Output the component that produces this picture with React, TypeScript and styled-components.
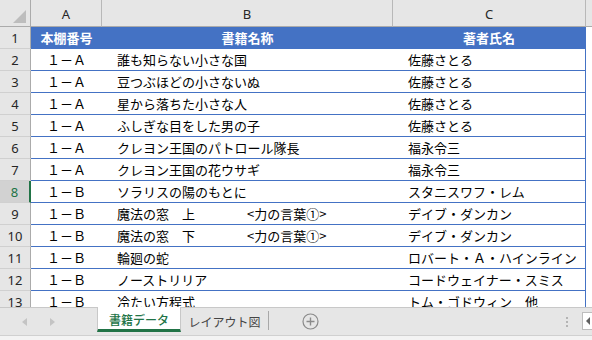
import React from 'react';
import styled, { createGlobalStyle } from 'styled-components';

const GlobalStyle = createGlobalStyle`
  html, body { margin: 0; padding: 0; background: #ffffff; }
  body { width: 592px; height: 340px; overflow: hidden; font-family: "Noto Sans CJK JP", "Noto Sans", sans-serif; }
`;

const HEAD_BG = '#e6e6e6';
const HEAD_LINE = '#ababab';
const BLUE = '#4472c4';
const GREEN = '#217346';

type Book = { shelf: string; title: string; author: string };

const books: Book[] = [
  { shelf: '１－Ａ', title: '誰も知らない小さな国', author: '佐藤さとる' },
  { shelf: '１－Ａ', title: '豆つぶほどの小さないぬ', author: '佐藤さとる' },
  { shelf: '１－Ａ', title: '星から落ちた小さな人', author: '佐藤さとる' },
  { shelf: '１－Ａ', title: 'ふしぎな目をした男の子', author: '佐藤さとる' },
  { shelf: '１－Ａ', title: 'クレヨン王国のパトロール隊長', author: '福永令三' },
  { shelf: '１－Ａ', title: 'クレヨン王国の花ウサギ', author: '福永令三' },
  { shelf: '１－Ｂ', title: 'ソラリスの陽のもとに', author: 'スタニスワフ・レム' },
  { shelf: '１－Ｂ', title: '魔法の窓　上　　　　<力の言葉①>', author: 'デイブ・ダンカン' },
  { shelf: '１－Ｂ', title: '魔法の窓　下　　　　<力の言葉①>', author: 'デイブ・ダンカン' },
  { shelf: '１－Ｂ', title: '輪廻の蛇', author: 'ロバート・Ａ・ハインライン' },
  { shelf: '１－Ｂ', title: 'ノーストリリア', author: 'コードウェイナー・スミス' },
  { shelf: '１－Ｂ', title: '冷たい方程式', author: 'トム・ゴドウィン　他' },
];

const Sheet = styled.div`
  display: grid;
  grid-template-columns: 31px 71px 291px 193px 6px;
  grid-template-rows: 27px;
  grid-auto-rows: 22px;
  height: 307px;
  overflow: hidden;
`;

const Corner = styled.div`
  position: relative;
  box-sizing: border-box;
  background: ${HEAD_BG};
  border-right: 1px solid ${HEAD_LINE};
  border-bottom: 1px solid ${HEAD_LINE};
  &::after {
    content: '';
    position: absolute;
    right: 4px;
    bottom: 3px;
    width: 0;
    height: 0;
    border-left: 13px solid transparent;
    border-bottom: 13px solid #bdbdbd;
  }
`;

const ColHead = styled.div`
  box-sizing: border-box;
  background: ${HEAD_BG};
  border-right: 1px solid #b8b8b8;
  border-bottom: 1px solid ${HEAD_LINE};
  display: flex;
  align-items: center;
  justify-content: center;
  font-family: "Noto Sans", sans-serif;
  font-size: 13px;
  color: #262626;
  padding-top: 1px;
`;

const RowHead = styled.div<{ $active?: boolean }>`
  box-sizing: border-box;
  background: ${(p) => (p.$active ? '#d2d2d2' : HEAD_BG)};
  border-right: ${(p) => (p.$active ? `2px solid ${GREEN}` : `1px solid ${HEAD_LINE}`)};
  border-bottom: 1px solid #d0d0d0;
  display: flex;
  align-items: center;
  justify-content: center;
  font-family: "Noto Sans", sans-serif;
  font-size: 13px;
  color: ${(p) => (p.$active ? GREEN : '#262626')};
`;

const Cell = styled.div<{ $center?: boolean; $head?: boolean; $edge?: boolean }>`
  box-sizing: border-box;
  display: flex;
  align-items: center;
  justify-content: ${(p) => (p.$center ? 'center' : 'flex-start')};
  padding-left: ${(p) => (p.$center ? '0' : '15px')};
  background: ${(p) => (p.$head ? BLUE : '#ffffff')};
  color: ${(p) => (p.$head ? '#ffffff' : '#000000')};
  font-weight: ${(p) => (p.$head ? 700 : 400)};
  font-size: 13px;
  white-space: pre;
  overflow: hidden;
  border-bottom: 1px solid ${BLUE};
  border-right: ${(p) => (p.$edge ? `1px solid ${BLUE}` : 'none')};
`;

const Spare = styled.div`
  background: #ffffff;
`;

const SpareHead = styled.div`
  box-sizing: border-box;
  background: ${HEAD_BG};
  border-bottom: 1px solid ${HEAD_LINE};
`;

const TabBar = styled.div`
  box-sizing: border-box;
  height: 28px;
  background: ${HEAD_BG};
  border-top: 1px solid #c8c8c8;
  display: flex;
  align-items: stretch;
`;

const Nav = styled.div`
  width: 97px;
  display: flex;
  align-items: center;
  gap: 20px;
  padding-left: 22px;
  box-sizing: border-box;
`;

const Arrow = styled.span<{ $dir: 'left' | 'right' }>`
  width: 0;
  height: 0;
  border-top: 4px solid transparent;
  border-bottom: 4px solid transparent;
  ${(p) => (p.$dir === 'left' ? 'border-right: 5px solid #c4c4c4;' : 'border-left: 5px solid #c4c4c4;')}
  margin-right: 3px;
`;

const Tab = styled.div<{ $active?: boolean; $width: number }>`
  box-sizing: border-box;
  width: ${(p) => p.$width}px;
  margin-top: ${(p) => (p.$active ? '-1px' : '0')};
  height: ${(p) => (p.$active ? '25px' : '27px')};
  background: ${(p) => (p.$active ? '#ffffff' : 'transparent')};
  border-bottom: ${(p) => (p.$active ? `3px solid ${GREEN}` : 'none')};
  border-left: ${(p) => (p.$active ? '1px solid #c8c8c8' : 'none')};
  border-right: ${(p) => (p.$active ? '1px solid #c8c8c8' : 'none')};
  display: flex;
  align-items: center;
  justify-content: center;
  padding-top: ${(p) => (p.$active ? '2px' : '0')};
  font-size: 12px;
  color: ${(p) => (p.$active ? GREEN : '#444444')};
  font-weight: ${(p) => (p.$active ? 500 : 400)};
`;

const Divider = styled.div`
  width: 1px;
  margin: 3px 0 5px;
  background: #a8a8a8;
`;

const AddButton = styled.div`
  margin-left: 33px;
  display: flex;
  align-items: center;
`;

const Filler = styled.div`
  flex: 1;
`;

const Dots = styled.div`
  display: flex;
  flex-direction: column;
  justify-content: center;
  gap: 2px;
  margin-right: 14px;
  & > span {
    width: 2px;
    height: 2px;
    background: #b4b4b4;
  }
`;

const ScrollStart = styled.div`
  box-sizing: border-box;
  width: 10px;
  margin: 4px 0 5px;
  background: #ffffff;
  border: 1px solid #bdbdbd;
  border-right: none;
  display: flex;
  align-items: center;
  padding-left: 3px;
  & > span {
    width: 0;
    height: 0;
    border-top: 4px solid transparent;
    border-bottom: 4px solid transparent;
    border-right: 4px solid #606060;
  }
`;

const StatusStrip = styled.div`
  box-sizing: border-box;
  height: 5px;
  border-top: 1px solid #d0d0d0;
  background: #f3f3f3;
`;

export default function App() {
  return (
    <>
      <GlobalStyle />
      <Sheet>
        <Corner />
        <ColHead>A</ColHead>
        <ColHead>B</ColHead>
        <ColHead>C</ColHead>
        <SpareHead />

        <RowHead>1</RowHead>
        <Cell $center $head>本棚番号</Cell>
        <Cell $center $head>書籍名称</Cell>
        <Cell $center $head $edge>著者氏名</Cell>
        <Spare />

        {books.map((b, i) => (
          <React.Fragment key={i}>
            <RowHead $active={i + 2 === 8}>{i + 2}</RowHead>
            <Cell $center>{b.shelf}</Cell>
            <Cell>{b.title}</Cell>
            <Cell $edge>{b.author}</Cell>
            <Spare />
          </React.Fragment>
        ))}
      </Sheet>
      <TabBar>
        <Nav>
          <Arrow $dir="left" />
          <Arrow $dir="right" />
        </Nav>
        <Tab $active $width={84}>書籍データ</Tab>
        <Tab $width={87}>レイアウト図</Tab>
        <Divider />
        <AddButton>
          <svg width="17" height="17" viewBox="0 0 17 17">
            <circle cx="8.5" cy="8.5" r="7.5" fill="none" stroke="#8a8a8a" strokeWidth="1.2" />
            <path d="M8.5 4.5v8M4.5 8.5h8" stroke="#8a8a8a" strokeWidth="1.4" />
          </svg>
        </AddButton>
        <Filler />
        <Dots>
          <span />
          <span />
          <span />
        </Dots>
        <ScrollStart>
          <span />
        </ScrollStart>
      </TabBar>
      <StatusStrip />
    </>
  );
}
